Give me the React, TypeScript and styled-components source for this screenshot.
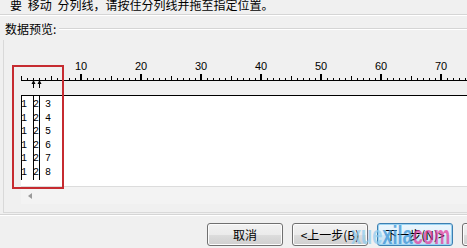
import * as React from 'react';
import styled, { createGlobalStyle } from 'styled-components';

const GlobalStyle = createGlobalStyle`
  html, body {
    margin: 0;
    padding: 0;
    background: #f0f0f0;
  }
  body {
    font-family: "Noto Sans CJK SC", "Noto Sans", sans-serif;
    font-size: 12px;
    color: #000;
  }
`;

const Window = styled.div`
  position: relative;
  width: 467px;
  height: 248px;
  overflow: hidden;
  background: #f0f0f0;
`;

const Instruction = styled.p`
  margin: -1px 0 0;
  padding-left: 10px;
  height: 12px;
  line-height: 12px;
  white-space: nowrap;
  word-spacing: 3px;
`;

const Etched = styled.div<{ $top: number }>`
  margin-top: ${(p) => p.$top}px;
  height: 0;
  border-top: 1px solid #d5d5d5;
  border-bottom: 1px solid #ffffff;
`;

const GroupHeader = styled.div`
  display: flex;
  align-items: center;
  margin-top: 7px;
  height: 12px;
  line-height: 12px;
  padding-left: 5px;
`;

const GroupLabel = styled.span`
  white-space: nowrap;
`;

const GroupLine = styled.div`
  flex: 1;
  margin-left: 3px;
  height: 0;
  border-top: 1px solid #d5d5d5;
  border-bottom: 1px solid #ffffff;
`;

const PreviewFrame = styled.div`
  margin: 5px 0 0 3px;
  padding: 18px 0 8px 17px;
  border-left: 1px solid #d9d9d9;
  border-bottom: 1px solid #d9d9d9;
`;

const RulerSvg = styled.svg`
  display: block;
  width: 446px;
  height: 37px;
`;

const DataArea = styled.div`
  position: relative;
  height: 91px;
  padding-top: 2px;
  box-sizing: border-box;
  background: #ffffff;
  border-top: 1px solid #000;
  font-family: "Liberation Mono", "DejaVu Sans Mono", monospace;
  font-size: 10px;
  line-height: 13.5px;
  white-space: pre;
`;

const DataRow = styled.div`
  height: 13.5px;
`;

const BreakLine = styled.div<{ $col: number }>`
  position: absolute;
  top: -1px;
  left: ${(p) => p.$col * 6}px;
  width: 1px;
  height: 85px;
  background: #000;
`;

const ScrollBar = styled.div`
  display: flex;
  align-items: center;
  height: 17px;
  border-top: 1px solid #dcdcdc;
  background: #f3f3f3;
`;

const ScrollButton = styled.div`
  width: 17px;
  height: 17px;
  display: flex;
  align-items: center;
  justify-content: center;
`;

const LeftArrow = styled.div`
  width: 0;
  height: 0;
  border-top: 3px solid transparent;
  border-bottom: 3px solid transparent;
  border-right: 4px solid #9a9a9a;
`;

const ButtonRow = styled.div`
  display: flex;
  gap: 9px;
  margin-top: 7px;
  padding-left: 207px;
`;

const Button = styled.button<{ $default?: boolean }>`
  flex: none;
  width: 76px;
  height: 23px;
  padding: 0;
  border-radius: 3px;
  border: 1px solid ${(p) => (p.$default ? '#3c7fb1' : '#707070')};
  background: ${(p) =>
    p.$default
      ? 'linear-gradient(#eaf6fd 0%, #e3f1fa 50%, #d2e8f6 51%, #c4e0f2 100%)'
      : 'linear-gradient(#f2f2f2 0%, #ebebeb 50%, #dddddd 51%, #cfcfcf 100%)'};
  box-shadow: inset 0 0 0 1px ${(p) => (p.$default ? '#9bd3f2' : '#fcfcfc')};
  font-family: "Noto Sans CJK SC", "Noto Sans", sans-serif;
  font-size: 12px;
  line-height: 21px;
  color: #000;
  white-space: nowrap;
  overflow: hidden;
`;

const RedMarker = styled.div`
  position: absolute;
  left: 12px;
  top: 65px;
  width: 52px;
  height: 124px;
  box-sizing: border-box;
  border: 2px solid #c62b30;
`;

const Watermark = styled.div`
  position: absolute;
  left: 351px;
  top: 221px;
  font-family: "Liberation Sans", Arial, sans-serif;
  font-size: 26px;
  font-weight: 700;
  line-height: 28px;
  white-space: nowrap;
  transform: scaleX(0.7);
  transform-origin: left top;
`;

const Mark = styled.span<{ $color: string }>`
  color: ${(p) => p.$color};
  opacity: 0.7;
`;

const rows = ['1 2 3', '1 2 4', '1 2 5', '1 2 6', '1 2 7', '1 2 8'];
const breaks = [0, 2, 3];
const arrows = [2, 3];

const Ruler: React.FC = () => {
  const ticks = [];
  for (let n = 0; n <= 74; n++) {
    if (n % 10 === 0 && n > 0) {
      ticks.push(<rect key={n} x={6 * n - 1} y={16} width={2} height={6} fill="#000" />);
      ticks.push(
        <text key={`t${n}`} x={6 * n} y={12} textAnchor="middle" fontSize="11" fontFamily="Liberation Sans, Arial, sans-serif" fill="#000">
          {n}
        </text>
      );
    } else if (n % 5 === 0) {
      ticks.push(<rect key={n} x={6 * n} y={18} width={1} height={4} fill="#000" />);
    } else {
      ticks.push(<rect key={n} x={6 * n} y={20} width={1} height={2} fill="#000" />);
    }
  }
  return (
    <RulerSvg viewBox="0 0 446 37">
      <rect x={0} y={22} width={446} height={1} fill="#000" />
      {ticks}
      {arrows.map((c) => (
        <g key={c}>
          <rect x={6 * c} y={23} width={1} height={7} fill="#000" />
          <polygon points={`${6 * c - 1.5},26 ${6 * c + 0.5},22 ${6 * c + 2.5},26`} fill="#000" />
        </g>
      ))}
    </RulerSvg>
  );
};

export default function App() {
  return (
    <>
      <GlobalStyle />
      <Window>
        <Instruction>要 移动 分列线，请按住分列线并拖至指定位置。</Instruction>
        <Etched $top={3} />
        <GroupHeader>
          <GroupLabel>数据预览:</GroupLabel>
          <GroupLine />
        </GroupHeader>
        <PreviewFrame>
          <Ruler />
          <DataArea>
            {rows.map((r) => (
              <DataRow key={r}>{r}</DataRow>
            ))}
            {breaks.map((c) => (
              <BreakLine key={c} $col={c} />
            ))}
          </DataArea>
          <ScrollBar>
            <ScrollButton>
              <LeftArrow />
            </ScrollButton>
          </ScrollBar>
        </PreviewFrame>
        <Etched $top={1} />
        <ButtonRow>
          <Button>取消</Button>
          <Button>&lt;上一步(B)</Button>
          <Button $default>下一步(N)&gt;</Button>
          <Button>完成(F)</Button>
        </ButtonRow>
        <RedMarker />
        <Watermark>
          <Mark $color="#8ccbef">xue</Mark>
          <Mark $color="#2f8fd6">xila</Mark>
          <Mark $color="#e0359a">com</Mark>
        </Watermark>
      </Window>
    </>
  );
}
